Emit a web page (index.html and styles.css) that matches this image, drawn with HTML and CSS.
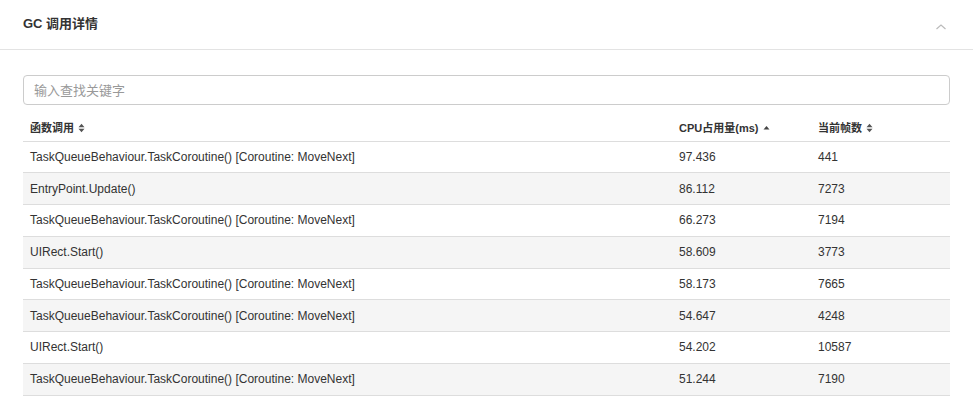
FILE: index.html
```html
<!DOCTYPE html>
<html lang="zh">
<head>
<meta charset="utf-8">
<title>GC 调用详情</title>
<link rel="stylesheet" href="styles.css">
</head>
<body>
<div class="panel">
  <div class="panel-header">
    <span class="panel-title">GC 调用详情</span>
    <svg class="chevron" width="12" height="8" viewBox="0 0 12 8"><path d="M1.5 6 L6 2 L10.5 6" fill="none" stroke="#bbb" stroke-width="1.2"/></svg>
  </div>
  <div class="panel-body">
    <input class="search" type="text" placeholder="输入查找关键字">
    <table class="grid">
      <colgroup><col class="c1"><col class="c2"><col class="c3"></colgroup>
      <thead>
        <tr>
          <th>函数调用 <svg class="sort" width="7" height="10" viewBox="0 0 7 10"><path d="M0.5 4.2 L3.5 0.8 L6.5 4.2Z M0.5 5.8 L3.5 9.2 L6.5 5.8Z" fill="#555"/></svg></th>
          <th>CPU占用量(ms) <svg class="sort" width="7" height="10" viewBox="0 0 7 10"><path d="M0.5 6.5 L3.5 3.1 L6.5 6.5Z" fill="#444"/></svg></th>
          <th>当前帧数 <svg class="sort" width="7" height="10" viewBox="0 0 7 10"><path d="M0.5 4.2 L3.5 0.8 L6.5 4.2Z M0.5 5.8 L3.5 9.2 L6.5 5.8Z" fill="#555"/></svg></th>
        </tr>
      </thead>
      <tbody>
        <tr><td>TaskQueueBehaviour.TaskCoroutine() [Coroutine: MoveNext]</td><td>97.436</td><td>441</td></tr>
        <tr><td>EntryPoint.Update()</td><td>86.112</td><td>7273</td></tr>
        <tr><td>TaskQueueBehaviour.TaskCoroutine() [Coroutine: MoveNext]</td><td>66.273</td><td>7194</td></tr>
        <tr><td>UIRect.Start()</td><td>58.609</td><td>3773</td></tr>
        <tr><td>TaskQueueBehaviour.TaskCoroutine() [Coroutine: MoveNext]</td><td>58.173</td><td>7665</td></tr>
        <tr><td>TaskQueueBehaviour.TaskCoroutine() [Coroutine: MoveNext]</td><td>54.647</td><td>4248</td></tr>
        <tr><td>UIRect.Start()</td><td>54.202</td><td>10587</td></tr>
        <tr><td>TaskQueueBehaviour.TaskCoroutine() [Coroutine: MoveNext]</td><td>51.244</td><td>7190</td></tr>
      </tbody>
    </table>
  </div>
</div>
</body>
</html>
```

FILE: styles.css
```css
* { box-sizing: border-box; }
html, body { margin: 0; padding: 0; background: #fff; }
body {
  font-family: "Liberation Sans", Arial, "Noto Sans CJK SC", sans-serif;
  color: #333;
}
.panel-header {
  height: 50px;
  padding: 0 23px;
  border-bottom: 1px solid #e3e3e3;
  display: flex;
  align-items: center;
  justify-content: space-between;
}
.panel-title {
  font-size: 13px;
  font-weight: bold;
  color: #333;
  margin-top: -4px;
}
.chevron { margin-right: 3px; margin-top: 4px; }
.panel-body { padding: 25px 23px 0; }
.search {
  display: block;
  width: 100%;
  height: 30px;
  border: 1px solid #ccc;
  border-radius: 4px;
  padding: 0 10px;
  font-family: "Liberation Sans", Arial, "Noto Sans CJK SC", sans-serif;
  font-size: 13px;
  color: #333;
  outline: none;
}
.search::placeholder { color: #999; }
.grid {
  width: 100%;
  margin-top: 8px;
  border-collapse: collapse;
  table-layout: fixed;
}
.c1 { width: 649px; }
.c2 { width: 139px; }
.c3 { width: 139px; }
.grid th {
  height: 28px;
  text-align: left;
  font-size: 11px;
  font-weight: bold;
  color: #333;
  padding: 0 7px;
  border-bottom: 1px solid #ddd;
  white-space: nowrap;
}
.sort { vertical-align: -1px; margin-left: 1px; }
.grid td {
  height: 31.75px;
  padding: 0 7px;
  font-size: 12px;
  color: #333;
  border-bottom: 1px solid #ddd;
  white-space: nowrap;
}
.grid tbody tr:nth-child(even) td { background: #f5f5f5; }
```
